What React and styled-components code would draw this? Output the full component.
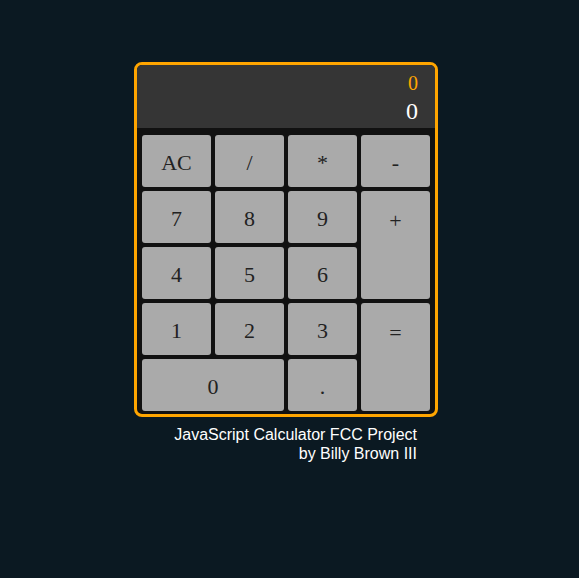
import React from 'react'
import styled, {createGlobalStyle} from 'styled-components'

const Global = createGlobalStyle`
    html, body {
        margin: 0;
        padding: 0;
        background: #0b1922;
        min-height: 100%;
    }
`;

const Page = styled.div`
    display: flex;
    flex-direction: column;
    align-items: center;
    padding: 62px 7px 0 0;
    min-height: 578px;
    box-sizing: border-box;
    background: #0b1922;
`;

const Calculator = styled.div`
    width: 304px;
    box-sizing: border-box;
    border: 3px solid #ffa500;
    border-radius: 8px;
    overflow: hidden;
    background: #111111;
`;

const Display = styled.div`
    height: 63px;
    background: #353535;
    display: flex;
    flex-direction: column;
    align-items: flex-end;
    justify-content: center;
    padding: 0 17px 0 0;
    font-family: "Liberation Serif", serif;
`;

const Formula = styled.div`
    color: ${props => props.color};
    font-size: ${props => props.size}px;
    line-height: 28px;
`;

const Keypad = styled.div`
    display: grid;
    grid-template-columns: repeat(4, 69px);
    grid-auto-rows: 52px;
    gap: 4px;
    padding: 7px 5px 3px 5px;
`;

const Key = styled.button`
    grid-column: span ${props => props.cols || 1};
    grid-row: span ${props => props.rows || 1};
    border: none;
    border-radius: 3px;
    background: #aaaaaa;
    color: #222222;
    font-family: "Liberation Serif", serif;
    font-size: 22px;
    line-height: 22px;
    padding: 0;
    cursor: pointer;
    display: flex;
    align-items: ${props => props.rows > 1 ? 'flex-start' : 'center'};
    justify-content: center;
    padding-top: ${props => props.rows > 1 ? '19px' : '4px'};
`;

const Credit = styled.div`
    width: 304px;
    box-sizing: border-box;
    padding: 8px 21px 0 0;
    text-align: right;
    color: #ffffff;
    font-family: "Liberation Sans", Arial, sans-serif;
    font-size: 16px;
    line-height: 19px;
`;

const keys = [
    {label: 'AC'}, {label: '/'}, {label: '*'}, {label: '-'},
    {label: '7'}, {label: '8'}, {label: '9'}, {label: '+', rows: 2},
    {label: '4'}, {label: '5'}, {label: '6'},
    {label: '1'}, {label: '2'}, {label: '3'}, {label: '=', rows: 2},
    {label: '0', cols: 2}, {label: '.'},
];

export default function App(){
    return(
        <Page>
            <Global/>
            <Calculator>
                <Display>
                    <Formula color={"#ffa500"} size={20}>0</Formula>
                    <Formula color={"#ffffff"} size={24}>0</Formula>
                </Display>
                <Keypad>
                    {keys.map((k, i) => (
                        <Key key={i} cols={k.cols} rows={k.rows}>{k.label}</Key>
                    ))}
                </Keypad>
            </Calculator>
            <Credit>
                JavaScript Calculator FCC Project<br/>
                by Billy Brown III
            </Credit>
        </Page>
    )
}
